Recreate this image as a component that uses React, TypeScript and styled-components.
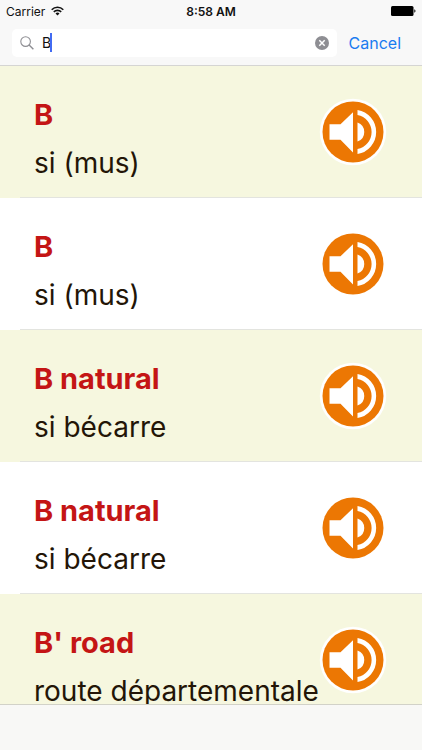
import React, { useState } from "react";
import styled, { createGlobalStyle } from "styled-components";

const GlobalStyle = createGlobalStyle`
  * { box-sizing: border-box; }
  body {
    margin: 0;
    background: #ffffff;
    font-family: Inter, "Liberation Sans", sans-serif;
  }
`;

const Screen = styled.div`
  display: flex;
  flex-direction: column;
  height: 100vh;
  overflow: hidden;
`;

const Header = styled.header`
  flex: none;
  background: #f8f8f8;
  border-bottom: 1px solid #d5d5d3;
`;

const StatusBar = styled.div`
  display: grid;
  grid-template-columns: 1fr auto 1fr;
  align-items: center;
  height: 22px;
  padding: 0 6px;
  font-size: 12px;
  color: #111111;
`;

const Carrier = styled.div`
  display: flex;
  align-items: center;
  gap: 6px;
`;

const Clock = styled.time`
  font-weight: 600;
`;

const BatterySlot = styled.div`
  display: flex;
  justify-content: flex-end;
`;

const SearchForm = styled.form`
  display: flex;
  align-items: center;
  gap: 12px;
  height: 43px;
  padding: 0 21px 1px 12px;
`;

const SearchField = styled.div`
  flex: 1;
  display: flex;
  align-items: center;
  gap: 8px;
  height: 28px;
  padding: 0 8px;
  border-radius: 5px;
  background: #ffffff;
`;

const SearchInput = styled.input`
  flex: 1;
  min-width: 0;
  border: 0;
  padding: 0;
  outline: 0;
  background: none;
  font: inherit;
  font-size: 14px;
  line-height: 20px;
  color: #111111;
`;

const Typed = styled.div`
  position: relative;
  flex: 1;
  display: flex;
`;

const Caret = styled.span`
  position: absolute;
  left: 8px;
  top: 0;
  width: 2px;
  height: 19px;
  background: #426bf2;
`;

const PlainButton = styled.button`
  display: flex;
  border: 0;
  padding: 0;
  background: none;
  font: inherit;
  cursor: pointer;
`;

const CancelButton = styled(PlainButton)`
  font-size: 16px;
  line-height: 20px;
  color: #1a7cf0;
`;

const Results = styled.ul`
  flex: 1;
  min-height: 0;
  margin: 0;
  padding: 0;
  list-style: none;
  overflow-x: hidden;
  overflow-y: auto;
  scrollbar-width: none;
`;

const Row = styled.li<{ $tinted: boolean }>`
  display: flex;
  align-items: flex-start;
  height: 132px;
  padding: 32px 35px 0 34px;
  background: ${(p) => (p.$tinted ? "#f6f7df" : "#ffffff")};
  background-image: linear-gradient(#e3e4df, #e3e4df);
  background-repeat: no-repeat;
  background-position: 20px 100%;
  background-size: 100% 1px;
`;

const Entry = styled.div`
  flex: 1;
  min-width: 0;
  white-space: nowrap;
`;

const Term = styled.h2`
  margin: 0 0 14px;
  font-size: 29px;
  line-height: 34px;
  font-weight: 700;
  color: #c41515;
`;

const Translation = styled.p`
  margin: 0;
  font-size: 28px;
  line-height: 34px;
  color: #231507;
`;

const Toolbar = styled.footer`
  flex: none;
  height: 46px;
  border-top: 1px solid #d2d2c8;
  background: #f8f8f6;
`;

const WifiIcon = () => (
  <svg width="13" height="10" viewBox="0 0 13 10" aria-hidden="true">
    <g fill="none" stroke="#111" strokeWidth="1.6">
      <path d="M.7 3.7a8.2 8.2 0 0 1 11.6 0" />
      <path d="M2.8 5.9a5.2 5.2 0 0 1 7.4 0" />
    </g>
    <path d="M6.5 9.6 4.5 7.6a2.8 2.8 0 0 1 4 0z" fill="#111" />
  </svg>
);

const BatteryIcon = () => (
  <svg width="25" height="10" viewBox="0 0 25 10" aria-hidden="true">
    <rect width="22.5" height="10" rx="1.5" fill="#000" />
    <path d="M23.3 3.3c1.6.5 1.6 2.9 0 3.4z" fill="#000" />
  </svg>
);

const MagnifierIcon = () => (
  <svg width="14" height="14" viewBox="0 0 14 14" fill="none" stroke="#8e8e93" aria-hidden="true">
    <circle cx="5.6" cy="5.6" r="4.8" strokeWidth="1.1" />
    <path d="m9.1 9.1 4.3 4.2" strokeWidth="1.4" />
  </svg>
);

const ClearIcon = () => (
  <svg width="14" height="14" viewBox="0 0 14 14" aria-hidden="true">
    <circle cx="7" cy="7" r="7" fill="#8e8e93" />
    <path d="m4.3 4.3 5.4 5.4m0-5.4L4.3 9.7" stroke="#fff" strokeWidth="1.5" />
  </svg>
);

const SpeakerIcon = () => (
  <svg width="68" height="68" viewBox="0 0 68 68" aria-hidden="true">
    <circle cx="34" cy="34" r="33.2" fill="#fff" />
    <circle cx="34" cy="34" r="30.5" fill="#ec7703" />
    <g fill="#fff">
      <path d="M10.5 26.2h11L34 14.2v40.4L21.5 41.8h-11z" />
      <path d="M38.5 12a22.3 22.3 0 0 1 0 44v-5a17.3 17.3 0 0 0 0-34z" />
      <path d="M38.5 24.4a10.2 10.2 0 0 1 0 19.2z" />
    </g>
  </svg>
);

const entries = [
  { id: 1, term: "B", translation: "si (mus)" },
  { id: 2, term: "B", translation: "si (mus)" },
  { id: 3, term: "B natural", translation: "si bécarre" },
  { id: 4, term: "B natural", translation: "si bécarre" },
  { id: 5, term: "B' road", translation: "route départementale" },
];

export default function App() {
  const [query, setQuery] = useState("B");
  return (
    <Screen>
      <GlobalStyle />
      <Header>
        <StatusBar>
          <Carrier>
            Carrier
            <WifiIcon />
          </Carrier>
          <Clock>8:58 AM</Clock>
          <BatterySlot>
            <BatteryIcon />
          </BatterySlot>
        </StatusBar>
        <SearchForm role="search" onSubmit={(e) => e.preventDefault()}>
          <SearchField>
            <MagnifierIcon />
            <Typed>
              <SearchInput
                aria-label="Search"
                value={query}
                onChange={(e) => setQuery(e.target.value)}
              />
              {query === "B" && <Caret />}
            </Typed>
            <PlainButton type="button" aria-label="Clear" onClick={() => setQuery("")}>
              <ClearIcon />
            </PlainButton>
          </SearchField>
          <CancelButton type="button">Cancel</CancelButton>
        </SearchForm>
      </Header>
      <Results>
        {entries.map((entry, index) => (
          <Row key={entry.id} $tinted={index % 2 === 0}>
            <Entry>
              <Term>{entry.term}</Term>
              <Translation>{entry.translation}</Translation>
            </Entry>
            <PlainButton type="button" aria-label={`Play ${entry.term}`}>
              <SpeakerIcon />
            </PlainButton>
          </Row>
        ))}
      </Results>
      <Toolbar />
    </Screen>
  );
}
